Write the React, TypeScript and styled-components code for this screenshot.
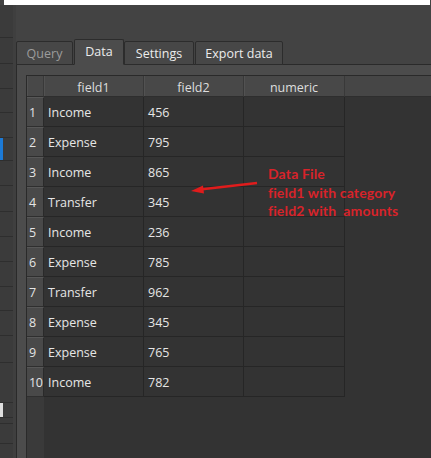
import React from 'react'
import styled, { createGlobalStyle } from 'styled-components'

const GlobalStyle = createGlobalStyle`
  html, body {
    margin: 0;
    padding: 0;
    background: #434343;
  }
  body {
    font-family: 'Open Sans', 'Noto Sans', sans-serif;
  }
`

const Screen = styled.div`
  position: relative;
  width: 431px;
  height: 458px;
  overflow: hidden;
  background: #434343;
  display: flex;
  flex-direction: column;
`

const TitleStrip = styled.div`
  height: 5px;
  margin: 0 1px 0 4px;
  background: #ffffff;
  flex: none;
`

const Body = styled.div`
  flex: 1;
  display: flex;
  min-height: 0;
`

const SidePanel = styled.div`
  width: 13px;
  flex: none;
  background: #3b3b3b;
  display: flex;
  flex-direction: column;
  padding-top: 32px;
`

const SideItem = styled.div<{ $h: number; $active?: boolean; $light?: boolean }>`
  height: ${({ $h }) => $h}px;
  flex: none;
  border-top: 1px solid #2e2e2e;
  box-sizing: border-box;
  background: ${({ $active, $light }) =>
    $active
      ? 'linear-gradient(to right, #1c7ad6 3px, #3b3b3b 3px)'
      : $light
        ? 'linear-gradient(to right, #dedede 3px, #3b3b3b 3px)'
        : 'transparent'};
`

const Gap = styled.div`
  width: 3px;
  flex: none;
  background: #3f3f3f;
`

const Main = styled.div`
  flex: 1;
  display: flex;
  flex-direction: column;
  padding-top: 35px;
  min-width: 0;
`

const TabBar = styled.div`
  display: flex;
  align-items: flex-end;
  height: 25px;
  flex: none;
  position: relative;
  z-index: 1;
  margin-bottom: -1px;
`

const Tab = styled.div<{ $selected?: boolean; $disabled?: boolean; $w: number }>`
  width: ${({ $w }) => $w}px;
  height: ${({ $selected }) => ($selected ? 26 : 24)}px;
  box-sizing: border-box;
  margin-right: ${({ $selected }) => ($selected ? 0 : 1)}px;
  border: 1px solid #2c2c2c;
  border-bottom: ${({ $selected }) => ($selected ? '1px solid #4c4c4c' : '1px solid #2c2c2c')};
  border-radius: 2px 2px 0 0;
  background: ${({ $selected }) => ($selected ? '#4c4c4c' : '#474747')};
  color: ${({ $disabled }) => ($disabled ? '#9c9c9c' : '#ececec')};
  font-size: 12.5px;
  display: flex;
  align-items: center;
  justify-content: center;
  padding-bottom: ${({ $selected }) => ($selected ? 2 : 0)}px;
`

const Pane = styled.div`
  flex: 1;
  background: #4c4c4c;
  border-top: 1px solid #2a2a2a;
  border-left: 1px solid #2a2a2a;
  padding: 10px 0 0 9px;
  min-height: 0;
`

const Table = styled.div`
  height: 100%;
  border-left: 1px solid #2a2a2a;
  border-top: 1px solid #2a2a2a;
  background: linear-gradient(to right, #3a3a3a 17px, #333333 17px);
  display: grid;
  grid-template-columns: 17px 100px 100px 101px 1fr;
  grid-auto-rows: 30px;
  grid-template-rows: 21px;
  align-content: start;
  color: #e6e6e6;
  font-size: 12.5px;
`

const HeaderCell = styled.div`
  background: #484848;
  border-right: 1px solid #393939;
  box-shadow: inset 1px 0 0 #525252;
  border-bottom: 1px solid #2e2e2e;
  display: flex;
  align-items: center;
  justify-content: center;
  color: #dedede;
  box-sizing: border-box;
  padding-top: 2px;
`

const HeaderFill = styled.div`
  background: #464646;
  border-bottom: 1px solid #2e2e2e;
`

const RowHead = styled.div`
  background: #494949;
  border-top: 1px solid #575757;
  border-bottom: 1px solid #2f2f2f;
  border-right: 1px solid #2a2a2a;
  box-sizing: border-box;
  display: flex;
  align-items: center;
  padding-left: 2px;
  padding-top: 1px;
  color: #e4e4e4;
  letter-spacing: -0.4px;
`

const Cell = styled.div`
  border-right: 1px solid #262626;
  border-bottom: 1px solid #262626;
  box-sizing: border-box;
  display: flex;
  align-items: center;
  padding-left: 4px;
  padding-top: 1px;
`

const Spacer = styled.div``

const Annotation = styled.div`
  position: absolute;
  left: 268px;
  top: 165px;
  color: #d8232a;
  font-family: Lato, 'Liberation Sans', sans-serif;
  font-weight: 700;
  font-size: 14px;
  letter-spacing: 0.15px;
  line-height: 18.5px;
  white-space: pre;
`

const ArrowLayer = styled.svg`
  position: absolute;
  left: 0;
  top: 0;
  pointer-events: none;
`

const rows: [string, string][] = [
  ['Income', '456'],
  ['Expense', '795'],
  ['Income', '865'],
  ['Transfer', '345'],
  ['Income', '236'],
  ['Expense', '785'],
  ['Transfer', '962'],
  ['Expense', '345'],
  ['Expense', '765'],
  ['Income', '782'],
]

const sideItems = [26, 25, 24, 25, 23, 25, 26, 25, 25, 25, 24, 25, 27, 40, 15, 6, 20, 30]

const App = () => {
  return (
    <>
      <GlobalStyle />
      <Screen>
        <TitleStrip />
        <Body>
          <SidePanel>
            {sideItems.map((h, i) => (
              <SideItem key={i} $h={h} $active={i === 4} $light={i === 14} />
            ))}
          </SidePanel>
          <Gap />
          <Main>
            <TabBar>
              <Tab $w={57} $disabled>Query</Tab>
              <Tab $w={50} $selected>Data</Tab>
              <Tab $w={70}>Settings</Tab>
              <Tab $w={88}>Export data</Tab>
            </TabBar>
            <Pane>
              <Table>
                <HeaderCell />
                <HeaderCell>field1</HeaderCell>
                <HeaderCell>field2</HeaderCell>
                <HeaderCell>numeric</HeaderCell>
                <HeaderFill />
                {rows.map(([cat, amt], i) => (
                  <React.Fragment key={i}>
                    <RowHead>{i + 1}</RowHead>
                    <Cell>{cat}</Cell>
                    <Cell>{amt}</Cell>
                    <Cell />
                    <Spacer />
                  </React.Fragment>
                ))}
              </Table>
            </Pane>
          </Main>
        </Body>

        <ArrowLayer width="431" height="458" viewBox="0 0 431 458">
          <line x1="257" y1="183" x2="200" y2="189.5" stroke="#e01c1c" strokeWidth="2.4" />
          <polygon points="191,191 203,185.5 204,193.5" fill="#e01c1c" />
        </ArrowLayer>
        <Annotation>{'Data File\nfield1 with category\nfield2 with  amounts'}</Annotation>
      </Screen>
    </>
  )
}

export default App
